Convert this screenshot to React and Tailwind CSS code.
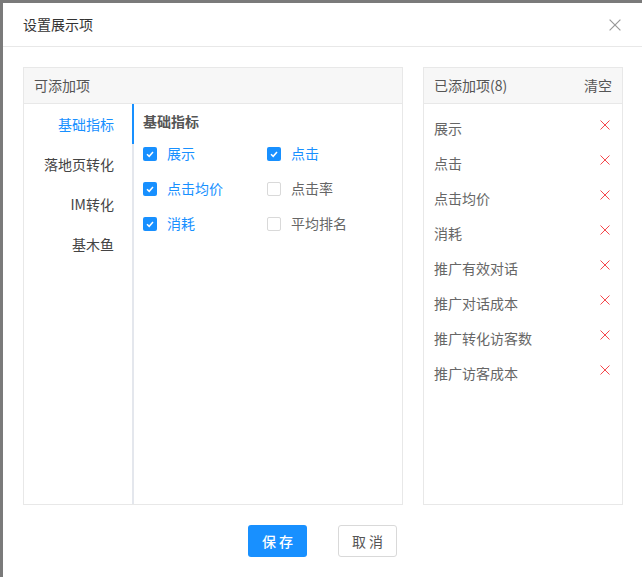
import React from "react";

const font = { fontFamily: '"Noto Sans CJK SC", "Noto Sans", sans-serif' };

function Check({ checked }) {
  if (checked) {
    return (
      <span className="w-[14px] h-[14px] rounded-[2px] bg-[#1890ff] flex items-center justify-center shrink-0">
        <svg width="10" height="10" viewBox="0 0 10 10">
          <path d="M2 5.2 L4.2 7.3 L8 3" fill="none" stroke="#fff" strokeWidth="1.5" />
        </svg>
      </span>
    );
  }
  return <span className="w-[14px] h-[14px] rounded-[2px] border border-[#d9d9d9] bg-white shrink-0" />;
}

function Cross({ size = 10, color = "#f5222d", w = 1.2 }) {
  return (
    <svg width={size} height={size} viewBox="0 0 10 10">
      <path d="M0.5 0.5 L9.5 9.5 M9.5 0.5 L0.5 9.5" stroke={color} strokeWidth={w} fill="none" />
    </svg>
  );
}

export default function App() {
  const nav = ["基础指标", "落地页转化", "IM转化", "基木鱼"];
  const items = [
    ["展示", true],
    ["点击", true],
    ["点击均价", true],
    ["点击率", false],
    ["消耗", true],
    ["平均排名", false],
  ];
  const added = ["展示", "点击", "点击均价", "消耗", "推广有效对话", "推广对话成本", "推广转化访客数", "推广访客成本"];

  return (
    <div className="w-[642px] h-[577px] bg-[#7a7a7a] pl-[3px] pt-[3px] overflow-hidden" style={font}>
      <div className="w-full h-full bg-white flex flex-col">
        <div className="h-[44px] border-b border-[#e8e8e8] flex items-center justify-between pl-[20px] pr-[21px] shrink-0">
          <span className="text-[14px] text-[#333]">设置展示项</span>
          <Cross size={12} color="#999" w={1} />
        </div>
        <div className="flex gap-[20px] pl-[20px] pt-[20px]">
          <div className="w-[380px] h-[438px] border border-[#e8e8e8] flex flex-col">
            <div className="h-[36px] bg-[#f7f7f7] border-b border-[#e8e8e8] flex items-center pl-[10px] text-[14px] text-[#555] shrink-0">
              可添加项
            </div>
            <div className="flex flex-1">
              <div className="w-[110px] border-r-2 border-[#e4e7ed] flex flex-col">
                {nav.map((n, i) => (
                  <div
                    key={n}
                    className={
                      "h-[40px] flex items-center justify-end pr-[18px] text-[14px] -mr-[2px] " +
                      (i === 0 ? "text-[#1890ff] border-r-2 border-[#1890ff]" : "text-[#444] border-r-2 border-transparent")
                    }
                  >
                    {n}
                  </div>
                ))}
              </div>
              <div className="flex-1 pl-[9px] pt-[7px]">
                <div className="text-[14px] font-semibold text-[#555] h-[20px] leading-[20px]">基础指标</div>
                <div className="grid grid-cols-[124px_1fr] mt-[5px]">
                  {items.map(([t, c]) => (
                    <div key={t} className="h-[35px] flex items-center gap-[10px]">
                      <Check checked={c} />
                      <span className={"text-[14px] " + (c ? "text-[#1890ff]" : "text-[#666]")}>{t}</span>
                    </div>
                  ))}
                </div>
              </div>
            </div>
          </div>
          <div className="w-[200px] h-[438px] border border-[#e8e8e8] flex flex-col">
            <div className="h-[36px] bg-[#f7f7f7] border-b border-[#e8e8e8] flex items-center justify-between pl-[10px] pr-[10px] text-[14px] text-[#555] shrink-0">
              <span>已添加项(8)</span>
              <span>清空</span>
            </div>
            <div className="flex flex-col pt-[7px]">
              {added.map((a) => (
                <div key={a} className="h-[35px] flex items-center justify-between pl-[10px] pr-[12px]">
                  <span className="text-[14px] text-[#666]">{a}</span>
                  <span className="-mt-[8px]">
                    <Cross size={10} color="#f5484d" w={1} />
                  </span>
                </div>
              ))}
            </div>
          </div>
        </div>
        <div className="flex justify-center gap-[31px] mt-[20px]">
          <button className="w-[59px] h-[32px] rounded-[3px] bg-[#1890ff] text-white text-[14px] font-medium tracking-[3px] pl-[3px]">
            保存
          </button>
          <button className="w-[59px] h-[32px] rounded-[3px] border border-[#d9d9d9] bg-white text-[#555] text-[14px] tracking-[3px] pl-[3px]">
            取消
          </button>
        </div>
      </div>
    </div>
  );
}
